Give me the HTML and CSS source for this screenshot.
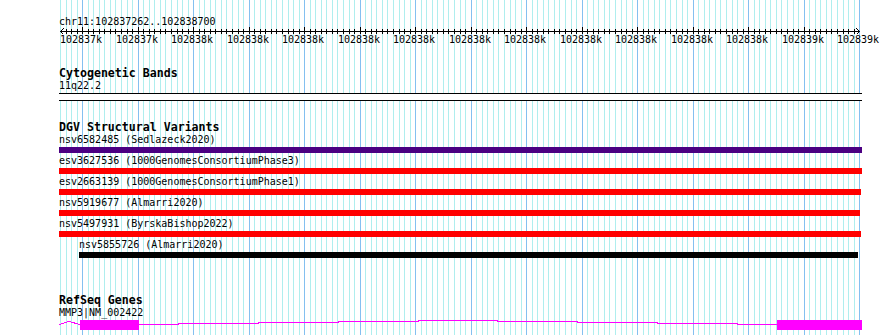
FILE: index.html
```html
<!DOCTYPE html>
<html lang="en">
<head>
    <meta charset="UTF-8">
    <meta name="viewport" content="width=device-width, initial-scale=1.0">
    <title>chr11:102837262..102838700</title>
    <link rel="stylesheet" href="styles.css">
</head>
<body>
    <div class="view">
        <svg class="grid" id="grid" width="890" height="335"></svg>

        <div class="panel">
            <div class="ruler">
                <div class="loc">chr11:102837262..102838700</div>
                <svg class="scale" id="scale" width="803" height="19">
                    <rect x="1" y="4" width="800" height="1" fill="#000"></rect>
                    <path class="arrow" d="M4.5 1.5 L1.5 4.5 L4.5 7.5"></path>
                    <path class="arrow" d="M797.5 1.5 L800.5 4.5 L797.5 7.5"></path>
                </svg>
            </div>

            <section class="track cyto">
                <h2>Cytogenetic Bands</h2>
                <div class="feat-label">11q22.2</div>
                <div class="band gneg"></div>
            </section>

            <section class="track dgv">
                <h2>DGV Structural Variants</h2>
                <div class="sv-row">
                    <div class="feat-label">nsv6582485 (Sedlazeck2020)</div>
                    <div class="sv-bar complex" style="width: 803px"></div>
                </div>
                <div class="sv-row">
                    <div class="feat-label">esv3627536 (1000GenomesConsortiumPhase3)</div>
                    <div class="sv-bar loss" style="width: 803px"></div>
                </div>
                <div class="sv-row">
                    <div class="feat-label">esv2663139 (1000GenomesConsortiumPhase1)</div>
                    <div class="sv-bar loss" style="width: 802px"></div>
                </div>
                <div class="sv-row">
                    <div class="feat-label">nsv5919677 (Almarri2020)</div>
                    <div class="sv-bar loss" style="width: 801px"></div>
                </div>
                <div class="sv-row">
                    <div class="feat-label">nsv5497931 (ByrskaBishop2022)</div>
                    <div class="sv-bar loss" style="width: 802px"></div>
                </div>
                <div class="sv-row" style="margin-left: 20px">
                    <div class="feat-label">nsv5855726 (Almarri2020)</div>
                    <div class="sv-bar other" style="width: 779px"></div>
                </div>
            </section>

            <section class="track refseq">
                <h2>RefSeq Genes</h2>
                <div class="feat-label">MMP3|NM_002422</div>
                <svg class="gene" width="803" height="12">
                    <polyline class="intron" points="0,5.5 10,2.5 21,5.5"></polyline>
                    <polyline class="intron" points="80,5.5 119,5.5 119,4.5 199,4.5 199,3.5 279,3.5 279,2.5 359,2.5 359,1.5 438,1.5 438,2.5 518,2.5 518,3.5 598,3.5 598,4.5 678,4.5 678,5.5 718,5.5"></polyline>
                    <rect class="exon" x="21" y="1" width="59" height="10"></rect>
                    <rect class="exon" x="718" y="1" width="85" height="10"></rect>
                </svg>
            </section>
        </div>
    </div>

    <script>
        const START = 102837262;
        const END = 102838700;
        const PX_PER_BP = 0.555;
        const ORIGIN_X = 61.1;   // x of START on the page
        const PANEL_X = 59;
        const svgNS = "http://www.w3.org/2000/svg";

        function toX(bp) {
            return Math.round(ORIGIN_X + (bp - START) * PX_PER_BP);
        }

        // 102837500 -> 102838k, 102838500 -> 102838k (round half to even)
        function kbLabel(bp) {
            const k = bp / 1000;
            const f = Math.floor(k);
            const r = k - f;
            let v = f;
            if (r > 0.5 || (r === 0.5 && f % 2 === 1)) v = f + 1;
            return v + "k";
        }

        function rect(parent, x, y, w, h, cls) {
            const r = document.createElementNS(svgNS, "rect");
            r.setAttribute("x", x);
            r.setAttribute("y", y);
            r.setAttribute("width", w);
            r.setAttribute("height", h);
            r.setAttribute("class", cls);
            parent.appendChild(r);
        }

        // background grid, one line every 10bp
        const grid = document.getElementById("grid");
        for (let bp = Math.floor(START / 10) * 10; bp <= END; bp += 10) {
            rect(grid, toX(bp), 0, 1, 335, bp % 100 === 0 ? "major" : "minor");
        }

        // ruler ticks and labels
        const scale = document.getElementById("scale");
        for (let bp = Math.ceil((START + 1) / 10) * 10; bp < END; bp += 10) {
            const x = toX(bp) - PANEL_X;
            if (bp % 100 === 0) {
                rect(scale, x, 0, 1, 7, "tick");
            } else {
                rect(scale, x, 2, 1, 5, "tick");
            }
        }
        for (let bp = Math.ceil(START / 100) * 100; bp <= END; bp += 100) {
            const t = document.createElementNS(svgNS, "text");
            t.setAttribute("x", toX(bp) - PANEL_X - 1);
            t.setAttribute("y", 16);
            t.setAttribute("class", "tick-label");
            t.textContent = kbLabel(bp);
            scale.appendChild(t);
        }
    </script>
</body>
</html>
```

FILE: styles.css
```css
body {
    margin: 0;
    background: #ffffff;
    font-family: "DejaVu Sans Mono", monospace;
    color: #000;
}
.view {
    position: relative;
    width: 890px;
    height: 335px;
    overflow: hidden;
}
.grid {
    position: absolute;
    left: 0;
    top: 0;
    shape-rendering: crispEdges;
}
.grid .minor {
    fill: #afeeee;
}
.grid .major {
    fill: #84c0f0;
}
.panel {
    position: relative;
    margin-left: 59px;
    width: 803px;
    padding-top: 16px;
}
.loc {
    font-size: 10px;
    line-height: 11px;
    height: 11px;
    white-space: nowrap;
}
.scale {
    display: block;
    overflow: visible;
    shape-rendering: crispEdges;
}
.scale .tick {
    fill: #000;
}
.scale .arrow {
    fill: none;
    stroke: #000;
    stroke-width: 1;
}
.tick-label {
    font-family: "DejaVu Sans Mono", monospace;
    font-size: 10px;
    text-anchor: middle;
    fill: #000;
}
.track h2 {
    margin: 0;
    font-size: 11.6px;
    line-height: 13px;
    font-weight: bold;
    white-space: nowrap;
}
.feat-label {
    font-size: 10px;
    line-height: 11px;
    height: 11px;
    white-space: nowrap;
}
.cyto {
    margin-top: 21px;
}
.band {
    margin-top: 2px;
    height: 6px;
    border-top: 1px solid #000;
    border-bottom: 1px solid #000;
}
.band.gneg {
    background: #ffffff;
}
.dgv {
    margin-top: 20px;
}
.sv-row {
    padding-bottom: 2px;
}
.sv-bar {
    margin-top: 2px;
    height: 6px;
}
.sv-bar.complex {
    background: #4b0082;
}
.sv-bar.loss {
    background: #ff0000;
}
.sv-bar.other {
    background: #000000;
}
.refseq {
    margin-top: 34px;
}
.gene {
    display: block;
    margin-top: 1px;
    shape-rendering: crispEdges;
}
.gene .intron {
    fill: none;
    stroke: #ff00ff;
    stroke-width: 1;
}
.gene .exon {
    fill: #ff00ff;
}
```
